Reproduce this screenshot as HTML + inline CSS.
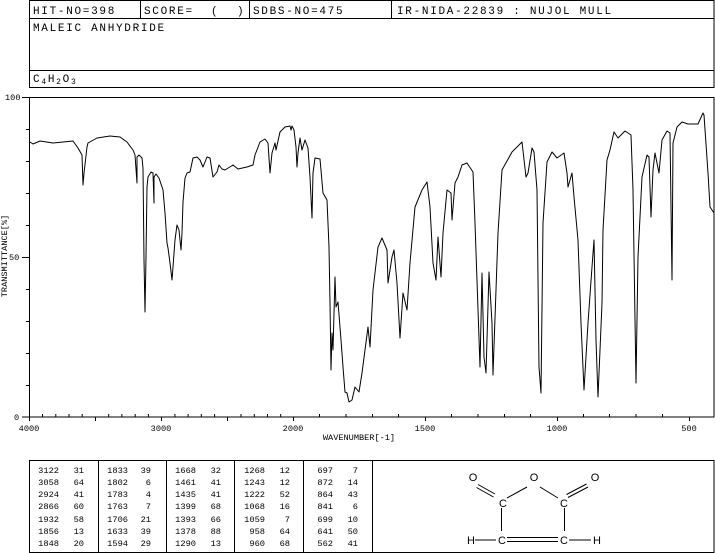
<!DOCTYPE html>
<html><head><meta charset="utf-8"><style>
html,body{margin:0;padding:0;background:#fff;width:715px;height:553px;overflow:hidden}
svg{display:block}
.h{font-family:"Liberation Mono",monospace;font-size:11px;letter-spacing:1.7px}
.s{font-family:"Liberation Mono",monospace;font-size:8.6px}
.t{font-family:"Liberation Mono",monospace;font-size:8.7px}
.m{font-family:"Liberation Sans",sans-serif;font-size:11px}
</style></head><body>
<svg width="715" height="553" viewBox="0 0 715 553" xmlns="http://www.w3.org/2000/svg">
<g fill="none" stroke="#000" stroke-width="1">
<rect x="29.5" y="0.5" width="684.5" height="87"/>
<path d="M29.5 18.5H714M29.5 70.5H714M140.5 0V18.5M249.5 0V18.5M391.5 0V18.5"/>
<rect x="29.5" y="97.5" width="684.5" height="319.5"/>
<path d="M22 97.5H29.5M26 129.5H29.5M26 161.5H29.5M26 193.5H29.5M26 225.5H29.5M22 257.5H29.5M26 289.5H29.5M26 321.5H29.5M26 353.5H29.5M26 385.5H29.5M22 417H29.5"/>
<path d="M29.5 417V421M42.5 414V417M55.8 414V417M69 414V417M82.2 414V417M95.5 417V421M108.7 414V417M121.9 414V417M135.2 414V417M148.4 414V417M161.5 417V421M174.9 414V417M188.1 414V417M201.3 414V417M214.6 414V417M227.5 417V421M241 414V417M254.3 414V417M267.5 414V417M280.7 414V417M293.5 417V421M319.5 414V417M346 414V417M372.5 414V417M398.5 414V417M425.5 417V421M451.5 414V417M478 414V417M504.5 414V417M530.5 414V417M557.5 417V421M583.5 414V417M609.5 414V417M636 414V417M662.5 414V417M689.5 417V421"/>
<rect x="29.5" y="460.5" width="684.5" height="92"/>
<path d="M98.5 460V553M166.5 460V553M234.5 460V553M303.5 460V553M372.5 460V553"/>
<polyline stroke-linejoin="round" points="30,142 33,144 40,141 53,143 73,141 78,148 82,155 83,185 84,173 87,147 88,143 97,138 110,136 120,137 127,142 133,150 135,155 137,183 137,157 139,155 142,158 143,168 144,260 145,312 146,257 147,187 148,177 151,172 153,173 154,203 154,177 156,174 159,178 163,190 165,213 167,243 168,248 170,263 172,280 173,267 175,240 177,225 179,230 181,250 182,233 183,202 185,178 187,173 190,172 193,158 197,157 200,160 203,167 207,157 210,158 213,177 217,172 219,165 222,169 225,170 233,165 238,169 247,167 253,165 255,155 260,142 265,139 268,143 270,173 272,153 275,143 276,150 280,132 285,127 290,126 291,130 292,126 294,130 296,147 297,167 298,153 300,138 302,150 305,140 308,148 310,177 312,218 313,173 315,158 320,159 323,193 327,200 329,247 330,303 331,370 332,333 333,350 335,277 336,307 338,302 341,340 343,367 345,392 347,393 349,402 352,400 355,387 359,392 362,373 365,350 368,327 370,347 373,290 378,247 382,238 387,250 388,283 392,257 394,250 397,283 400,338 403,293 407,310 410,263 415,207 422,190 427,182 430,207 433,263 436,280 438,237 441,277 443,233 447,190 451,193 452,220 455,183 458,177 462,165 467,163 473,172 475,223 480,367 482,273 484,357 486,373 489,272 492,323 493,375 498,233 502,170 512,152 522,142 526,177 528,173 532,148 534,152 537,190 539,367 541,393 543,223 547,162 552,152 557,158 564,153 567,173 568,187 572,173 574,197 578,240 581,323 584,390 588,323 592,267 594,240 596,340 598,397 602,303 603,230 607,160 610,150 614,132 618,138 625,131 631,135 633,190 636,383 638,257 642,177 647,155 649,157 651,217 653,170 655,153 659,173 662,140 667,131 670,133 672,280 673,143 677,127 682,122 688,124 698,124 703,113 704,115 708,173 710,207 714,213"/>
<path d="M478 484.5L495 494M476.5 487.5L493.5 497M507 498L527 487M540 487L558 498M566.5 494.5L586.5 484M568 497.5L588 487M501.5 508V531M564.5 508V531M507 537.5H558M507 541.5H558M475 540H496M569 540H591"/>
</g>
<g fill="#000">
<text class="h" x="33" y="14">HIT-NO=398</text>
<text class="h" x="144" y="14">SCORE=</text>
<text class="h" x="211" y="14">(</text>
<text class="h" x="237" y="14">)</text>
<text class="h" x="253" y="14">SDBS-NO=475</text>
<text class="h" x="397" y="14">IR-NIDA-22839 : NUJOL MULL</text>
<text class="h" x="33" y="31">MALEIC ANHYDRIDE</text>
<text class="h" x="33" y="82">C<tspan font-size="8" dy="2">4</tspan><tspan dy="-2">H</tspan><tspan font-size="8" dy="2">2</tspan><tspan dy="-2">O</tspan><tspan font-size="8" dy="2">3</tspan></text>
<text class="s" x="5" y="100">100</text>
<text class="s" x="9" y="260">50</text>
<text class="s" x="14" y="420">0</text>
<text class="s" x="7" y="256" text-anchor="middle" transform="rotate(-90 7 256)" font-size="8">TRANSMITTANCE[%]</text>
<text class="s" x="29" y="431" text-anchor="middle">4000</text>
<text class="s" x="161" y="431" text-anchor="middle">3000</text>
<text class="s" x="293" y="431" text-anchor="middle">2000</text>
<text class="s" x="425" y="431" text-anchor="middle">1500</text>
<text class="s" x="557" y="431" text-anchor="middle">1000</text>
<text class="s" x="689" y="431" text-anchor="middle">500</text>
<text class="s" x="359" y="440" text-anchor="middle" font-size="7.5">WAVENUMBER[-1]</text>
<g class="t" text-anchor="end">
<text x="59" y="473">3122</text><text x="84" y="473">31</text>
<text x="59" y="485">3058</text><text x="84" y="485">64</text>
<text x="59" y="497">2924</text><text x="84" y="497">41</text>
<text x="59" y="509">2866</text><text x="84" y="509">60</text>
<text x="59" y="522">1932</text><text x="84" y="522">58</text>
<text x="59" y="534">1856</text><text x="84" y="534">13</text>
<text x="59" y="546">1848</text><text x="84" y="546">20</text>
<text x="128" y="473">1833</text><text x="151" y="473">39</text>
<text x="128" y="485">1802</text><text x="151" y="485">6</text>
<text x="128" y="497">1783</text><text x="151" y="497">4</text>
<text x="128" y="509">1763</text><text x="151" y="509">7</text>
<text x="128" y="522">1706</text><text x="151" y="522">21</text>
<text x="128" y="534">1633</text><text x="151" y="534">39</text>
<text x="128" y="546">1594</text><text x="151" y="546">29</text>
<text x="196" y="473">1668</text><text x="221" y="473">32</text>
<text x="196" y="485">1461</text><text x="221" y="485">41</text>
<text x="196" y="497">1435</text><text x="221" y="497">41</text>
<text x="196" y="509">1399</text><text x="221" y="509">68</text>
<text x="196" y="522">1393</text><text x="221" y="522">66</text>
<text x="196" y="534">1378</text><text x="221" y="534">88</text>
<text x="196" y="546">1290</text><text x="221" y="546">13</text>
<text x="265" y="473">1268</text><text x="290" y="473">12</text>
<text x="265" y="485">1243</text><text x="290" y="485">12</text>
<text x="265" y="497">1222</text><text x="290" y="497">52</text>
<text x="265" y="509">1068</text><text x="290" y="509">16</text>
<text x="265" y="522">1059</text><text x="290" y="522">7</text>
<text x="265" y="534">958</text><text x="290" y="534">64</text>
<text x="265" y="546">960</text><text x="290" y="546">68</text>
<text x="333" y="473">697</text><text x="358" y="473">7</text>
<text x="333" y="485">872</text><text x="358" y="485">14</text>
<text x="333" y="497">864</text><text x="358" y="497">43</text>
<text x="333" y="509">841</text><text x="358" y="509">6</text>
<text x="333" y="522">699</text><text x="358" y="522">10</text>
<text x="333" y="534">641</text><text x="358" y="534">50</text>
<text x="333" y="546">562</text><text x="358" y="546">41</text>
</g>
<g class="m" text-anchor="middle">
<text x="473" y="481">O</text>
<text x="534" y="481">O</text>
<text x="595" y="481">O</text>
<text x="503" y="507">C</text>
<text x="564" y="507">C</text>
<text x="502" y="544">C</text>
<text x="564" y="544">C</text>
<text x="471" y="544">H</text>
<text x="597" y="544">H</text>
</g>
</g>
</svg>
</body></html>
